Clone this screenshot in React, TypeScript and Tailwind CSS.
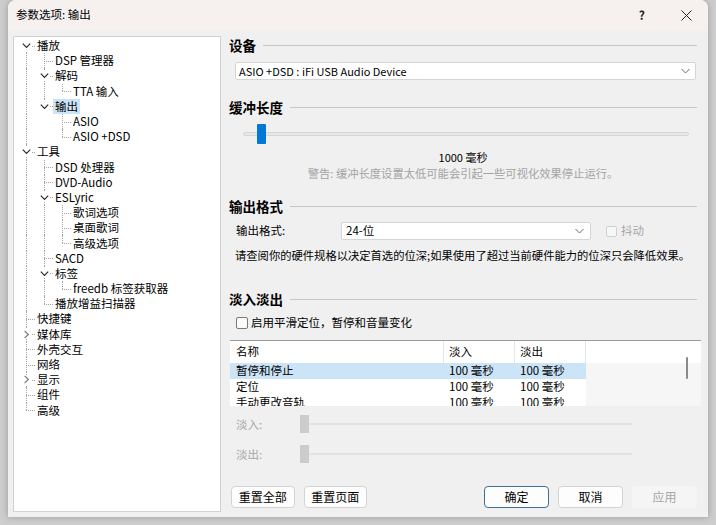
import React from "react";

type Node = { label: string; open?: boolean; kids?: boolean; sel?: boolean; children?: Node[] };

const tree: Node[] = [
  {
    label: "播放",
    open: true,
    children: [
      { label: "DSP 管理器" },
      { label: "解码", open: true, children: [{ label: "TTA 输入" }] },
      { label: "输出", open: true, sel: true, children: [{ label: "ASIO" }, { label: "ASIO +DSD" }] },
    ],
  },
  {
    label: "工具",
    open: true,
    children: [
      { label: "DSD 处理器" },
      { label: "DVD-Audio" },
      { label: "ESLyric", open: true, children: [{ label: "歌词选项" }, { label: "桌面歌词" }, { label: "高级选项" }] },
      { label: "SACD" },
      { label: "标签", open: true, children: [{ label: "freedb 标签获取器" }] },
      { label: "播放增益扫描器" },
    ],
  },
  { label: "快捷键" },
  { label: "媒体库", kids: true },
  { label: "外壳交互" },
  { label: "网络" },
  { label: "显示", kids: true },
  { label: "组件" },
  { label: "高级" },
];

type Row = { node: Node; depth: number; flags: boolean[]; first: boolean };

function flatten(nodes: Node[], depth: number, flags: boolean[], out: Row[]) {
  nodes.forEach((n, i) => {
    const f = [...flags, i === nodes.length - 1];
    out.push({ node: n, depth, flags: f, first: depth === 0 && i === 0 });
    if (n.open && n.children) flatten(n.children, depth + 1, f, out);
  });
}

const rows: Row[] = [];
flatten(tree, 0, [], rows);

const dot = "border-dotted border-[#a3a3a3]";

function Chevron({ down }: { down: boolean }) {
  return (
    <span className="absolute left-[4px] top-1/2 -translate-y-1/2 flex h-[10px] w-[10px] items-center justify-center bg-white">
      <svg width="9" height="9" viewBox="0 0 9 9" fill="none" strokeWidth="1.2" stroke={down ? "#2a2a2a" : "#7a7a7a"}>
        {down ? <path d="M0.8 2.6 L4.5 6.3 L8.2 2.6" /> : <path d="M2.6 0.8 L6.3 4.5 L2.6 8.2" />}
      </svg>
    </span>
  );
}

function TreeRow({ r }: { r: Row }) {
  const hasKids = r.node.open || r.node.kids;
  return (
    <div className="flex h-[15.2px] items-center">
      {r.flags.map((last, i) =>
        i < r.depth ? (
          <div key={i} className="relative h-full w-[18px] shrink-0">
            {!last && <span className={`absolute left-[9px] top-0 h-full border-l ${dot}`} />}
          </div>
        ) : (
          <div key={i} className="relative h-full w-[18px] shrink-0">
            <span
              className={`absolute left-[9px] border-l ${dot} ${
                r.first ? "top-1/2 h-1/2" : last ? "top-0 h-1/2" : "top-0 h-full"
              }`}
            />
            <span className={`absolute left-[9px] top-1/2 w-[9px] border-t ${dot}`} />
            {hasKids && <Chevron down={!!r.node.open} />}
          </div>
        )
      )}
      <span className={`whitespace-nowrap px-[2px] leading-[15px] ${r.node.sel ? "bg-[#cce4f7]" : ""}`}>
        {r.node.label}
      </span>
    </div>
  );
}

function Group({ title }: { title: string }) {
  return (
    <div className="flex h-[18px] items-center gap-[7px]">
      <span className="text-[13.5px] font-bold leading-[18px]">{title}</span>
      <div className="h-0 flex-1 border-t border-[#c6c6c6]" />
    </div>
  );
}

function DropArrow() {
  return (
    <svg width="9" height="6" viewBox="0 0 9 6" fill="none" stroke="#6a6a6a" strokeWidth="1">
      <path d="M0.5 1 L4.5 5 L8.5 1" />
    </svg>
  );
}

function Btn({ label, focus, disabled }: { label: string; focus?: boolean; disabled?: boolean }) {
  return (
    <button
      type="button"
      className={`flex h-[22px] w-[65px] items-center justify-center rounded-[4px] text-[12px] leading-none ${
        disabled
          ? "bg-[#f5f5f5] text-[#a6a6a6]"
          : focus
          ? "border border-[#3b6f9c] bg-[#fdfdfd] text-black"
          : "border border-[#d3d3d3] bg-[#fdfdfd] text-black"
      }`}
    >
      {label}
    </button>
  );
}

const fadeRows = [
  { name: "暂停和停止", sel: true },
  { name: "定位" },
  { name: "手动更改音轨" },
];

export default function App() {
  return (
    <div
      className="h-[525px] w-[716px] overflow-hidden bg-[#cdcdcd] text-black"
      style={{ fontFamily: '"Noto Sans CJK SC", "Liberation Sans", sans-serif' }}
    >
      <div className="ml-[8px] flex h-[517px] w-[700px] flex-col overflow-hidden rounded-tl-[8px] rounded-tr-[8px] bg-[#f0f0f0] shadow-[0_0_6px_rgba(0,0,0,0.25)]">
        {/* title bar */}
        <div className="flex h-[30px] shrink-0 items-center bg-[#f6f1ef] pl-[8px]">
          <span className="text-[11.5px] leading-none">参数选项: 输出</span>
          <div className="flex-1" />
          <span className="mr-[36px] text-[12px] font-bold leading-none text-[#222]">?</span>
          <svg width="11" height="11" viewBox="0 0 11 11" stroke="#222" strokeWidth="1" className="mr-[16px]">
            <path d="M0.5 0.5 L10.5 10.5 M10.5 0.5 L0.5 10.5" />
          </svg>
        </div>

        <div className="flex flex-1 gap-[8px] pl-[5px] pt-[6px]">
          {/* tree */}
          <div className="h-[476px] w-[208px] shrink-0 border border-[#d2d2d2] bg-white pl-[3px] pt-[1px] text-[11.5px]">
            {rows.map((r, i) => (
              <TreeRow key={i} r={r} />
            ))}
          </div>

          {/* settings */}
          <div className="flex w-[468px] flex-col text-[11.5px]">
            <Group title="设备" />
            <div className="ml-[6px] mt-[8px] flex h-[18px] w-[461px] items-center justify-between rounded-[2px] border border-[#d5d5d5] bg-white pl-[3px] pr-[5px]">
              <span className="text-[11px] leading-none">ASIO +DSD : iFi USB Audio Device</span>
              <DropArrow />
            </div>

            <div className="mt-[18px]">
              <Group title="缓冲长度" />
            </div>
            <div className="relative mt-[8px] h-[20px]">
              <div className="absolute left-[14px] top-[8px] h-[4px] w-[446px] rounded-full border border-[#d6d6d6] bg-[#e7e7e7]" />
              <div className="absolute left-[28px] top-0 h-[20px] w-[9px] rounded-[1px] bg-[#0078d7]" />
            </div>
            <div className="mt-[6px] h-[14px] text-center text-[11px] leading-[14px]">1000 毫秒</div>
            <div className="mt-[1px] h-[16px] text-center text-[11.3px] leading-[16px] text-[#a3a3a3]">
              警告: 缓冲长度设置太低可能会引起一些可视化效果停止运行。
            </div>

            <div className="mt-[16px]">
              <Group title="输出格式" />
            </div>
            <div className="mt-[7px] flex h-[18px] items-center">
              <span className="ml-[7px] w-[105px] leading-none">输出格式:</span>
              <div className="flex h-[18px] w-[250px] items-center justify-between rounded-[2px] border border-[#d5d5d5] bg-white pl-[4px] pr-[6px]">
                <span className="leading-none">24-位</span>
                <DropArrow />
              </div>
              <span className="ml-[15px] h-[11px] w-[11px] rounded-[2px] border border-[#cfcfcf] bg-[#f7f7f7]" />
              <span className="ml-[4px] leading-none text-[#a6a6a6]">抖动</span>
            </div>
            <div className="ml-[6px] mt-[7px] h-[16px] whitespace-nowrap text-[11.3px] leading-[16px]">
              请查阅你的硬件规格以决定首选的位深;如果使用了超过当前硬件能力的位深只会降低效果。
            </div>

            <div className="mt-[27px]">
              <Group title="淡入淡出" />
            </div>
            <div className="mt-[7px] flex h-[16px] items-center">
              <span className="ml-[7px] h-[12px] w-[12px] rounded-[2px] border border-[#7a7a7a] bg-[#fbfbfb]" />
              <span className="ml-[3px] leading-none">启用平滑定位，暂停和音量变化</span>
            </div>

            {/* fade list */}
            <div className="relative ml-[1px] mt-[9px] h-[66px] w-[471px] overflow-hidden border-t border-[#9a9a9a] bg-[#f6f6f6]">
              <div className="flex h-[22px] items-center bg-white">
                <div className="flex h-full w-[214px] items-center border-r border-[#e5e5e5] pl-[6px]">名称</div>
                <div className="flex h-full w-[71px] items-center border-r border-[#e5e5e5] pl-[5px]">淡入</div>
                <div className="flex h-full w-[71px] items-center border-r border-[#e5e5e5] pl-[5px]">淡出</div>
                <div className="flex-1" />
              </div>
              {fadeRows.map((f) => (
                <div
                  key={f.name}
                  className={`flex h-[16px] w-[356px] items-center leading-none ${f.sel ? "bg-[#cce4f7]" : "bg-white"}`}
                >
                  <span className="w-[214px] pl-[6px]">{f.name}</span>
                  <span className="w-[71px] pl-[5px]">100 毫秒</span>
                  <span className="w-[71px] pl-[5px]">100 毫秒</span>
                </div>
              ))}
              <div className="absolute right-[13px] top-[16px] h-[22px] w-[2px] rounded-full bg-[#8a8a8a]" />
            </div>

            {/* disabled sliders */}
            <div className="relative mt-[9px] h-[18px]">
              <span className="absolute left-[7px] top-[2px] leading-[14px] text-[#a6a6a6]">淡入:</span>
              <div className="absolute left-[80px] top-[8px] h-[2px] w-[323px] bg-[#e2e2e2]" />
              <div className="absolute left-[71px] top-0 h-[18px] w-[9px] bg-[#cccccc]" />
            </div>
            <div className="relative mt-[12px] h-[18px]">
              <span className="absolute left-[7px] top-[2px] leading-[14px] text-[#a6a6a6]">淡出:</span>
              <div className="absolute left-[80px] top-[8px] h-[2px] w-[323px] bg-[#e2e2e2]" />
              <div className="absolute left-[71px] top-0 h-[18px] w-[9px] bg-[#cccccc]" />
            </div>

            <div className="ml-[2px] mt-[23px] flex gap-[9px]">
              <Btn label="重置全部" />
              <Btn label="重置页面" />
              <div className="ml-[108px] flex gap-[9px]">
                <Btn label="确定" focus />
                <Btn label="取消" />
                <Btn label="应用" disabled />
              </div>
            </div>
          </div>
        </div>
      </div>
    </div>
  );
}
